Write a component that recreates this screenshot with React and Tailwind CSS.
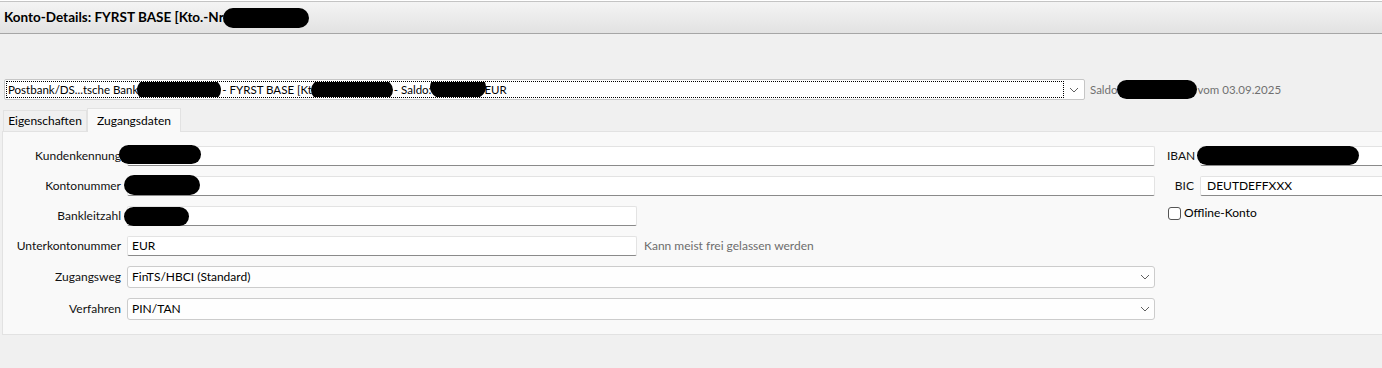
import React from "react";

const Blob = ({ w, h = 20, className = "" }) => (
  <span
    className={`inline-block bg-black rounded-full align-middle ${className}`}
    style={{ width: w, height: h }}
  />
);

const Chevron = () => (
  <svg width="10" height="6" viewBox="0 0 10 6" className="text-[#606060]">
    <path d="M1 1 L5 5 L9 1" fill="none" stroke="currentColor" strokeWidth="1" />
  </svg>
);

const TextInput = ({ w, children }) => (
  <div
    className={`${w} h-[20px] bg-white border border-[#e3e3e3] border-b-[#8a8a8a] rounded-[2px] flex items-center pl-[4px] text-[12px] text-black`}
  >
    {children}
  </div>
);

const Select = ({ children }) => (
  <div className="w-[1028px] h-[22px] bg-[#fefefe] border border-[#cccccc] rounded-[3px] flex items-center justify-between pl-[4px] pr-[4px] text-[12px] text-black">
    <span>{children}</span>
    <Chevron />
  </div>
);

const Row = ({ label, children }) => (
  <div className="flex items-center gap-[6px]">
    <div className="w-[118px] text-right text-[12px] text-[#111111]">{label}</div>
    {children}
  </div>
);

export default function App() {
  return (
    <div className="w-[1382px] h-[368px] bg-[#f0f0f0] overflow-hidden font-['Lato',sans-serif] text-[12px] leading-none">
      {/* Header */}
      <div className="bg-white pt-[1px]">
        <div className="h-[33px] border-t border-[#c4c4c4] border-b border-b-[#a6a6a6] bg-gradient-to-b from-[#f4f4f4] to-[#e2e2e2] flex items-center pl-[4px]">
          <span className="text-[13.5px] font-bold text-black whitespace-nowrap">
            Konto-Details: FYRST BASE [Kto.-Nr.
          </span>
          <Blob w="86px" h="20px" className="-ml-[3px]" />
        </div>
      </div>

      {/* Account combo */}
      <div className="mt-[45px] flex items-center pl-[4px]">
        <div className="w-[1081px] h-[21px] bg-white border border-[#c6c6c6] rounded-[2px] flex items-center">
          <div className="h-[17px] w-[1058px] ml-[1px] border border-dotted border-black flex items-center pl-[1px] whitespace-nowrap overflow-hidden text-[11.5px] text-black">
            <span>Postbank/DS...tsche Bank</span>
            <Blob w="84px" h="22px" className="-ml-[1px]" />
            <span className="ml-[1px]">- FYRST BASE [Kt</span>
            <Blob w="82px" h="20px" className="-ml-[1px]" />
            <span className="ml-[1px]">- Saldo:</span>
            <Blob w="56px" h="22px" className="-ml-[1px] -mt-[6px]" />
            <span className="-ml-[2px]">EUR</span>
          </div>
          <div className="flex-1 flex items-center justify-center">
            <Chevron />
          </div>
        </div>
        <div className="ml-[5px] flex items-center text-[#707070] text-[11.5px] whitespace-nowrap">
          <span>Saldo</span>
          <Blob w="80px" h="19px" className="-ml-[1px]" />
          <span className="ml-[1px]">vom 03.09.2025</span>
        </div>
      </div>

      {/* Tabs */}
      <div className="mt-[7px] flex items-end pl-[3px] h-[24px]">
        <div className="h-[21px] w-[84px] bg-[#f0f0f0] border border-[#e2e2e2] border-b-0 flex items-center justify-center text-[12px] text-black">
          Eigenschaften
        </div>
        <div className="h-[24px] w-[94px] bg-[#f9f9f9] border border-[#e2e2e2] border-b-0 flex items-center justify-center text-[12px] text-black relative top-[1px] z-10">
          Zugangsdaten
        </div>
      </div>

      {/* Panel */}
      <div className="ml-[2px] h-[204px] bg-[#f9f9f9] border border-[#e2e2e2] border-r-0 pt-[14px] flex">
        <div className="flex flex-col gap-[10px]">
          <Row label="Kundenkennung">
            <div className="relative">
              <TextInput w="w-[1028px]" />
              <span className="absolute left-[-8px] top-[-1px]">
                <Blob w="82px" h="19px" />
              </span>
            </div>
          </Row>
          <Row label="Kontonummer">
            <div className="relative">
              <TextInput w="w-[1028px]" />
              <span className="absolute left-[-3px] top-[-1px]">
                <Blob w="76px" h="20px" />
              </span>
            </div>
          </Row>
          <Row label="Bankleitzahl">
            <div className="relative">
              <TextInput w="w-[510px]" />
              <span className="absolute left-[-3px] top-[1px]">
                <Blob w="65px" h="19px" />
              </span>
            </div>
          </Row>
          <Row label="Unterkontonummer">
            <TextInput w="w-[510px]">EUR</TextInput>
            <span className="ml-[1px] text-[#6d6d6d] whitespace-nowrap">
              Kann meist frei gelassen werden
            </span>
          </Row>
          <Row label="Zugangsweg">
            <Select>FinTS/HBCI (Standard)</Select>
          </Row>
          <Row label="Verfahren">
            <Select>PIN/TAN</Select>
          </Row>
        </div>

        <div className="ml-[12px] flex flex-col gap-[10px]">
          <div className="flex items-center gap-[6px]">
            <div className="w-[27px] text-left text-[12px] text-[#111111]">IBAN</div>
            <div className="relative">
              <TextInput w="w-[200px]" />
              <span className="absolute left-[-3px] top-[0px]">
                <Blob w="162px" h="19px" />
              </span>
            </div>
          </div>
          <div className="flex items-center gap-[6px]">
            <div className="w-[27px] text-right text-[12px] text-[#111111]">BIC</div>
            <TextInput w="w-[200px]">
              <span className="ml-[2px]">DEUTDEFFXXX</span>
            </TextInput>
          </div>
          <div className="flex items-center h-[14px] ml-[1px]">
            <div className="w-[13px] h-[13px] rounded-[3px] border border-[#555] bg-white" />
            <span className="ml-[3px] text-[12px] text-black">Offline-Konto</span>
          </div>
        </div>
      </div>
    </div>
  );
}
